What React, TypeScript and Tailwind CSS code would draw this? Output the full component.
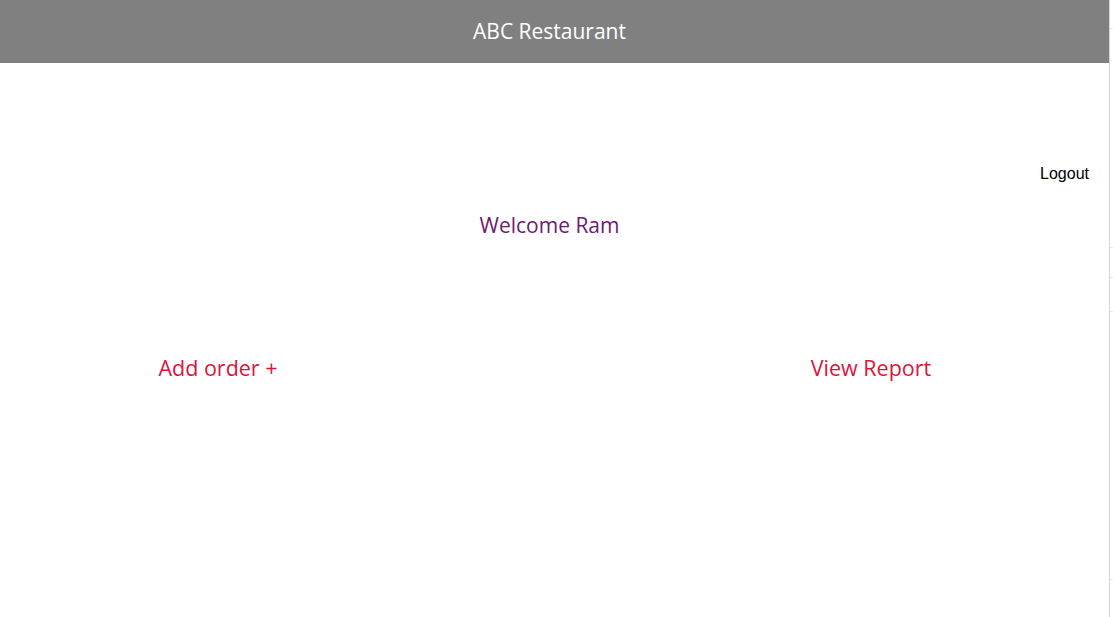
import React from "react";

const App = () => {
  return (
    <div className="flex h-[617px] w-[1114px] overflow-hidden bg-white">
      <div className="flex w-[1110px] flex-col border-r border-[#d4d4d4]">
        <header className="flex h-[63px] items-center justify-center bg-[#808080] pr-[10px] pt-px">
          <h1 className="font-['Open_Sans',sans-serif] text-[21px] text-white">ABC Restaurant</h1>
        </header>
        <div className="flex justify-end pr-5 pt-[99px]">
          <a className="font-['Liberation_Sans',Arial,sans-serif] text-[16px] text-black">Logout</a>
        </div>
        <div className="mt-[24px] pr-[10px] text-center font-['Open_Sans',sans-serif] text-[21px] text-[#6e1a72]">
          Welcome Ram
        </div>
        <div className="mt-[110px] grid grid-cols-[436px_1fr_436px] pr-5 font-['Open_Sans',sans-serif] text-[21.5px] text-[#dc143c]">
          <div className="text-center">Add order +</div>
          <div />
          <div className="text-center">View Report</div>
        </div>
      </div>
      <div className="flex w-[3px] flex-col bg-white">
        <div className="mt-[28px] h-px bg-[#e5e5e5]" />
        <div className="mt-[218px] h-px bg-[#e5e5e5]" />
        <div className="mt-[29px] h-px bg-[#e5e5e5]" />
        <div className="mt-[33px] h-px bg-[#e5e5e5]" />
        <div className="mt-[267px] h-px bg-[#e5e5e5]" />
      </div>
    </div>
  );
};

export default App;
